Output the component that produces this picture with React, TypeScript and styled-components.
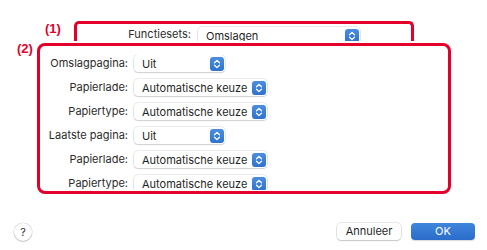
import * as React from 'react'
import styled, { createGlobalStyle } from 'styled-components'

const red = '#e4002b'

const Global = createGlobalStyle`
  html, body {
    margin: 0;
    padding: 0;
    background: #ffffff;
  }
  body {
    font-family: Inter, "Liberation Sans", Arial, sans-serif;
    -webkit-font-smoothing: antialiased;
  }
`

const S = {
  Page: styled.div`
  width: 487px;
  height: 250px;
  padding-top: 21px;
  box-sizing: border-box;
  display: flex;
  flex-direction: column;
  overflow: hidden;
`,
  Section: styled.div<{ $indent: number }>`
  display: flex;
  align-items: flex-start;
  padding-left: ${p => p.$indent}px;
`,
  Marker: styled.div<{ $gap: number }>`
  width: 19px;
  margin-right: ${p => p.$gap}px;
  color: ${red};
  font-family: "Liberation Sans", Arial, sans-serif;
  font-weight: 700;
  font-size: 13px;
  line-height: 14px;
  margin-top: 1px;
`,
  TopBox: styled.div`
  width: 340px;
  height: 20px;
  box-sizing: border-box;
  border: 3px solid ${red};
  border-bottom: none;
  border-radius: 5px 5px 0 0;
  overflow: hidden;
  padding-top: 3px;
  display: flex;
  align-items: flex-start;
`,
  TopLabel: styled.div`
  width: 114px;
  text-align: right;
  margin-right: 7px;
  font-size: 11px;
  line-height: 15px;
  color: #2b2b2b;
`,
  MainBox: styled.div`
  width: 414px;
  height: 151px;
  margin-top: 2px;
  box-sizing: border-box;
  border: 3px solid ${red};
  border-radius: 8px;
  padding-top: 9px;
`,
  Grid: styled.div`
  height: 135px;
  overflow: hidden;
  display: grid;
  grid-template-columns: 88px auto;
  grid-auto-rows: 17px;
  column-gap: 6px;
  row-gap: 7px;
  align-items: center;
`,
  Label: styled.div`
  text-align: right;
  font-size: 11px;
  line-height: 17px;
  color: #2b2b2b;
  white-space: nowrap;
`,
  Popup: styled.div<{ $width: number }>`
  width: ${p => p.$width}px;
  height: 17px;
  box-sizing: border-box;
  display: flex;
  align-items: center;
  justify-content: space-between;
  padding: 0 1px 0 8px;
  background: #ffffff;
  border-radius: 4px;
  box-shadow: 0 0 0 0.5px rgba(0, 0, 0, 0.16), 0 1px 1.5px rgba(0, 0, 0, 0.12);
  font-size: 11px;
  color: #1f1f1f;
  white-space: nowrap;
`,
  Arrow: styled.span`
  width: 14px;
  height: 14px;
  border-radius: 3px;
  background: linear-gradient(#4a8de0, #2f72cf);
  display: flex;
  align-items: center;
  justify-content: center;
  flex-shrink: 0;
`,
  Footer: styled.div`
  margin-top: 27px;
  display: flex;
  align-items: center;
  padding: 0 12px 0 14px;
`,
  Help: styled.div`
  width: 18px;
  height: 18px;
  border-radius: 50%;
  box-sizing: border-box;
  background: #ffffff;
  box-shadow: 0 0 0 0.5px rgba(0, 0, 0, 0.18), 0 1px 1.5px rgba(0, 0, 0, 0.15);
  display: flex;
  align-items: center;
  justify-content: center;
  font-size: 11px;
  color: #333;
  margin-top: 2px;
`,
  Spacer: styled.div`
  flex: 1;
`,
  Button: styled.button<{ $primary?: boolean }>`
  width: 64px;
  height: 17px;
  margin-left: 10px;
  border: none;
  border-radius: 4px;
  padding: 0;
  font-family: inherit;
  font-size: 11px;
  line-height: 17px;
  color: ${p => (p.$primary ? '#ffffff' : '#1f1f1f')};
  background: ${p => (p.$primary ? 'linear-gradient(#3f86dc, #2b6cc9)' : '#ffffff')};
  box-shadow: ${p => (p.$primary
    ? '0 1px 1px rgba(0, 0, 0, 0.15)'
    : '0 0 0 0.5px rgba(0, 0, 0, 0.18), 0 1px 1.5px rgba(0, 0, 0, 0.15)')};
`
}

function Chevrons() {
  return (
    <svg width="8" height="10" viewBox="0 0 8 10" fill="none">
      <path d="M1.5 3.8 L4 1.4 L6.5 3.8" stroke="#fff" strokeWidth="1.3" strokeLinecap="round" strokeLinejoin="round" />
      <path d="M1.5 6.2 L4 8.6 L6.5 6.2" stroke="#fff" strokeWidth="1.3" strokeLinecap="round" strokeLinejoin="round" />
    </svg>
  )
}

function Select({ value, width }: { value: string; width: number }) {
  return (
    <S.Popup $width={width}>
      <span>{value}</span>
      <S.Arrow><Chevrons /></S.Arrow>
    </S.Popup>
  )
}

const rows = [
  { label: 'Omslagpagina:', value: 'Uit', width: 91 },
  { label: 'Papierlade:', value: 'Automatische keuze', width: 133 },
  { label: 'Papiertype:', value: 'Automatische keuze', width: 133 },
  { label: 'Laatste pagina:', value: 'Uit', width: 91 },
  { label: 'Papierlade:', value: 'Automatische keuze', width: 133 },
  { label: 'Papiertype:', value: 'Automatische keuze', width: 133 }
]

export default function App() {
  return (
    <S.Page>
      <Global />
      <S.Section $indent={45}>
        <S.Marker $gap={10}>(1)</S.Marker>
        <S.TopBox>
          <S.TopLabel>Functiesets:</S.TopLabel>
          <Select value="Omslagen" width={162} />
        </S.TopBox>
      </S.Section>
      <S.Section $indent={17}>
        <S.Marker $gap={1}>(2)</S.Marker>
        <S.MainBox>
          <S.Grid>
            {rows.map((r, i) => (
              <React.Fragment key={i}>
                <S.Label>{r.label}</S.Label>
                <Select value={r.value} width={r.width} />
              </React.Fragment>
            ))}
          </S.Grid>
        </S.MainBox>
      </S.Section>
      <S.Footer>
        <S.Help>?</S.Help>
        <S.Spacer />
        <S.Button>Annuleer</S.Button>
        <S.Button $primary>OK</S.Button>
      </S.Footer>
    </S.Page>
  )
}
